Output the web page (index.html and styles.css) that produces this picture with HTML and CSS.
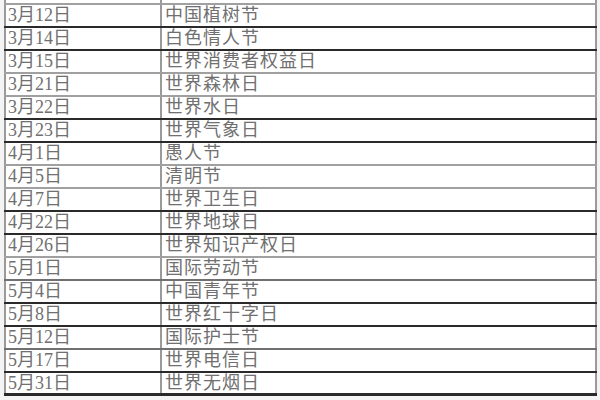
FILE: index.html
```html
<!DOCTYPE html>
<html lang="zh-CN">
<head>
<meta charset="utf-8">
<title>节日表</title>
<link rel="stylesheet" href="styles.css">
</head>
<body>
<div class="sheet">
  <div class="table">
    <div class="row grey"><div class="date">3月8日</div><div class="name">国际劳动妇女节</div></div>
    <div class="row dark"><div class="date">3月12日</div><div class="name">中国植树节</div></div>
    <div class="row dark"><div class="date">3月14日</div><div class="name">白色情人节</div></div>
    <div class="row grey"><div class="date">3月15日</div><div class="name">世界消费者权益日</div></div>
    <div class="row grey"><div class="date">3月21日</div><div class="name">世界森林日</div></div>
    <div class="row dark"><div class="date">3月22日</div><div class="name">世界水日</div></div>
    <div class="row dark"><div class="date">3月23日</div><div class="name">世界气象日</div></div>
    <div class="row grey"><div class="date">4月1日</div><div class="name">愚人节</div></div>
    <div class="row grey"><div class="date">4月5日</div><div class="name">清明节</div></div>
    <div class="row dark"><div class="date">4月7日</div><div class="name">世界卫生日</div></div>
    <div class="row dark"><div class="date">4月22日</div><div class="name">世界地球日</div></div>
    <div class="row grey"><div class="date">4月26日</div><div class="name">世界知识产权日</div></div>
    <div class="row mid"><div class="date">5月1日</div><div class="name">国际劳动节</div></div>
    <div class="row dark"><div class="date">5月4日</div><div class="name">中国青年节</div></div>
    <div class="row dark"><div class="date">5月8日</div><div class="name">世界红十字日</div></div>
    <div class="row mid"><div class="date">5月12日</div><div class="name">国际护士节</div></div>
    <div class="row dark"><div class="date">5月17日</div><div class="name">世界电信日</div></div>
    <div class="row dark"><div class="date">5月31日</div><div class="name">世界无烟日</div></div>
  </div>
</div>
</body>
</html>
```
FILE: styles.css
```css
html, body {
  margin: 0;
  padding: 0;
  background: #ffffff;
}

.sheet {
  width: 600px;
  height: 400px;
  overflow: hidden;
  padding-left: 4px;
  box-sizing: border-box;
  background: #f4f4f4;
}

.table {
  width: 593px;
  margin-top: -18px;
  background: #ffffff;
  font-family: "Liberation Serif", "Noto Sans CJK SC", serif;
  font-size: 18px;
  color: #707070;
}

.row {
  display: grid;
  grid-template-columns: 156px 1fr;
  height: 21px;
  border-bottom: 2px solid #a0a0a0;
}

.row.mid {
  border-bottom-color: #707070;
}

.row.dark {
  border-bottom-color: #2a2a2a;
}

.row:last-child {
  height: 20px;
  border-bottom-width: 3px;
}

.date,
.name {
  line-height: 21px;
  white-space: nowrap;
  overflow: hidden;
}

.date {
  border-left: 2px solid #9a9a9a;
  padding-left: 2px;
}

.name {
  border-left: 2px solid #9a9a9a;
  border-right: 2px solid #9a9a9a;
  padding-left: 3px;
  letter-spacing: 1px;
}
```
